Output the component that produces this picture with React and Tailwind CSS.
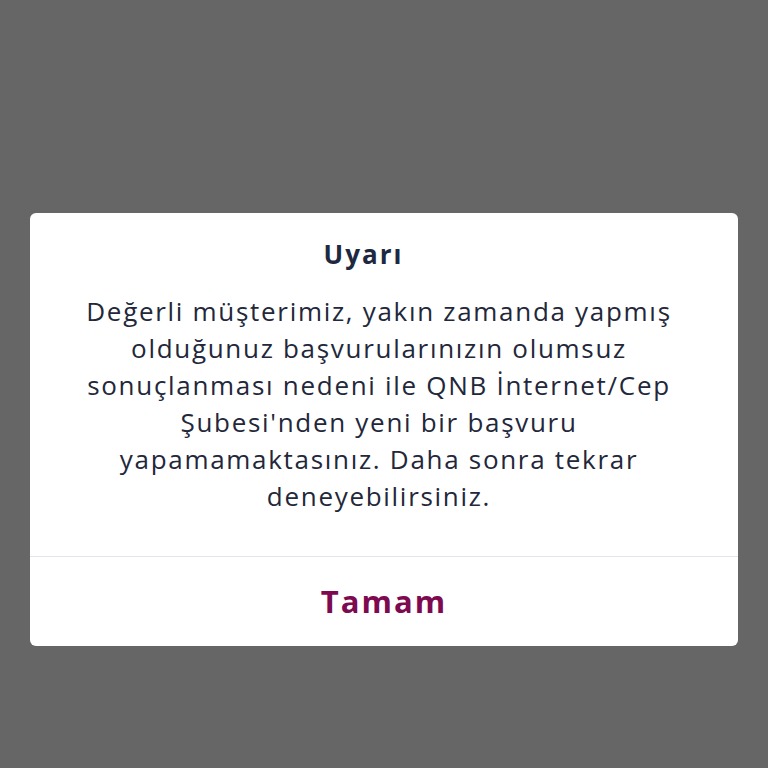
export default function App() {
  const lines = [
    "Değerli müşterimiz, yakın zamanda yapmış",
    "olduğunuz başvurularınızın olumsuz",
    "sonuçlanması nedeni ile QNB İnternet/Cep",
    "Şubesi'nden yeni bir başvuru",
    "yapamamaktasınız. Daha sonra tekrar",
    "deneyebilirsiniz.",
  ];
  return (
    <div className="min-h-screen w-full bg-[#666666] px-[30px] pt-[213px]" style={{ fontFamily: "'Open Sans', sans-serif" }}>
      <div className="w-full rounded-[6px] bg-white">
        <div className="pt-[23px] pr-[41px] text-center text-[26px] font-bold leading-[36px] tracking-[2px] text-[#1e2940]">Uyarı</div>
        <div className="mt-[21px] pb-[41px] pr-[10px] text-center text-[26px] leading-[37px] tracking-[1.7px] text-[#23273a]">
          {lines.map((l, i) => (
            <div key={i}>{l}</div>
          ))}
        </div>
        <div className="h-px bg-[#e3e5ea]" />
        <div className="flex h-[89px] items-center justify-center text-[31px] font-bold tracking-[2px] text-[#7d0a50]">Tamam</div>
      </div>
    </div>
  );
}
